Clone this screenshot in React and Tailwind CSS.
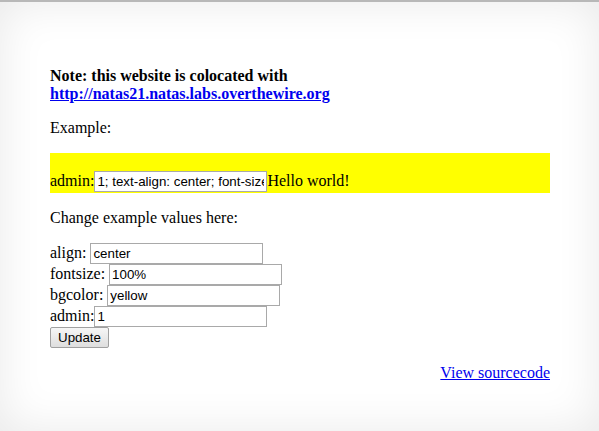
import React from 'react';

const inputCls =
  "w-[173px] h-[21px] border border-[#a9a9a9] bg-white px-[2px] py-[1px] text-[13.33px] text-black align-baseline [font-family:'Liberation_Sans',Arial,sans-serif]";

const App = () => {
  return (
    <div className="h-[431px] overflow-hidden border-t-2 border-[#b8b8b8] bg-white shadow-[inset_0_0_45px_rgba(0,0,0,0.09)] [font-family:'Liberation_Serif','Times_New_Roman',serif] text-[16px] leading-[normal] text-black">
      <div className="ml-[50px] mr-[49px] pt-[49px]">
        <p className="my-4 font-bold">
          Note: this website is colocated with
          <br />
          <a href="#" className="text-[#0000ee] underline">
            http://natas21.natas.labs.overthewire.org
          </a>
        </p>

        <p className="my-4">Example:</p>

        <div className="bg-[#ffff00] h-[40px] pt-[18px]">
          <div className="h-[22px]">
            admin:<input className={inputCls} defaultValue="1; text-align: center; font-size: 100%;" />Hello world!
          </div>
        </div>

        <p className="my-4">Change example values here:</p>

        <form>
          <div className="h-[21px]">
            align: <input className={inputCls} defaultValue="center" />
          </div>
          <div className="h-[21px]">
            fontsize: <input className={inputCls} defaultValue="100%" />
          </div>
          <div className="h-[21px]">
            bgcolor: <input className={inputCls} defaultValue="yellow" />
          </div>
          <div className="h-[21px]">
            admin:<input className={inputCls} defaultValue="1" />
          </div>
          <div className="h-[21px]">
            <button
              type="button"
              className="h-[21px] w-[59px] rounded-[2px] border border-[#a0a0a0] bg-gradient-to-b from-[#f6f6f6] to-[#dedede] text-[13.33px] [font-family:'Liberation_Sans',Arial,sans-serif]"
            >
              Update
            </button>
          </div>
        </form>

        <div className="mt-4 text-right">
          <a href="#" className="text-[#0000ee] underline">
            View sourcecode
          </a>
        </div>
      </div>
    </div>
  );
};

export default App;
